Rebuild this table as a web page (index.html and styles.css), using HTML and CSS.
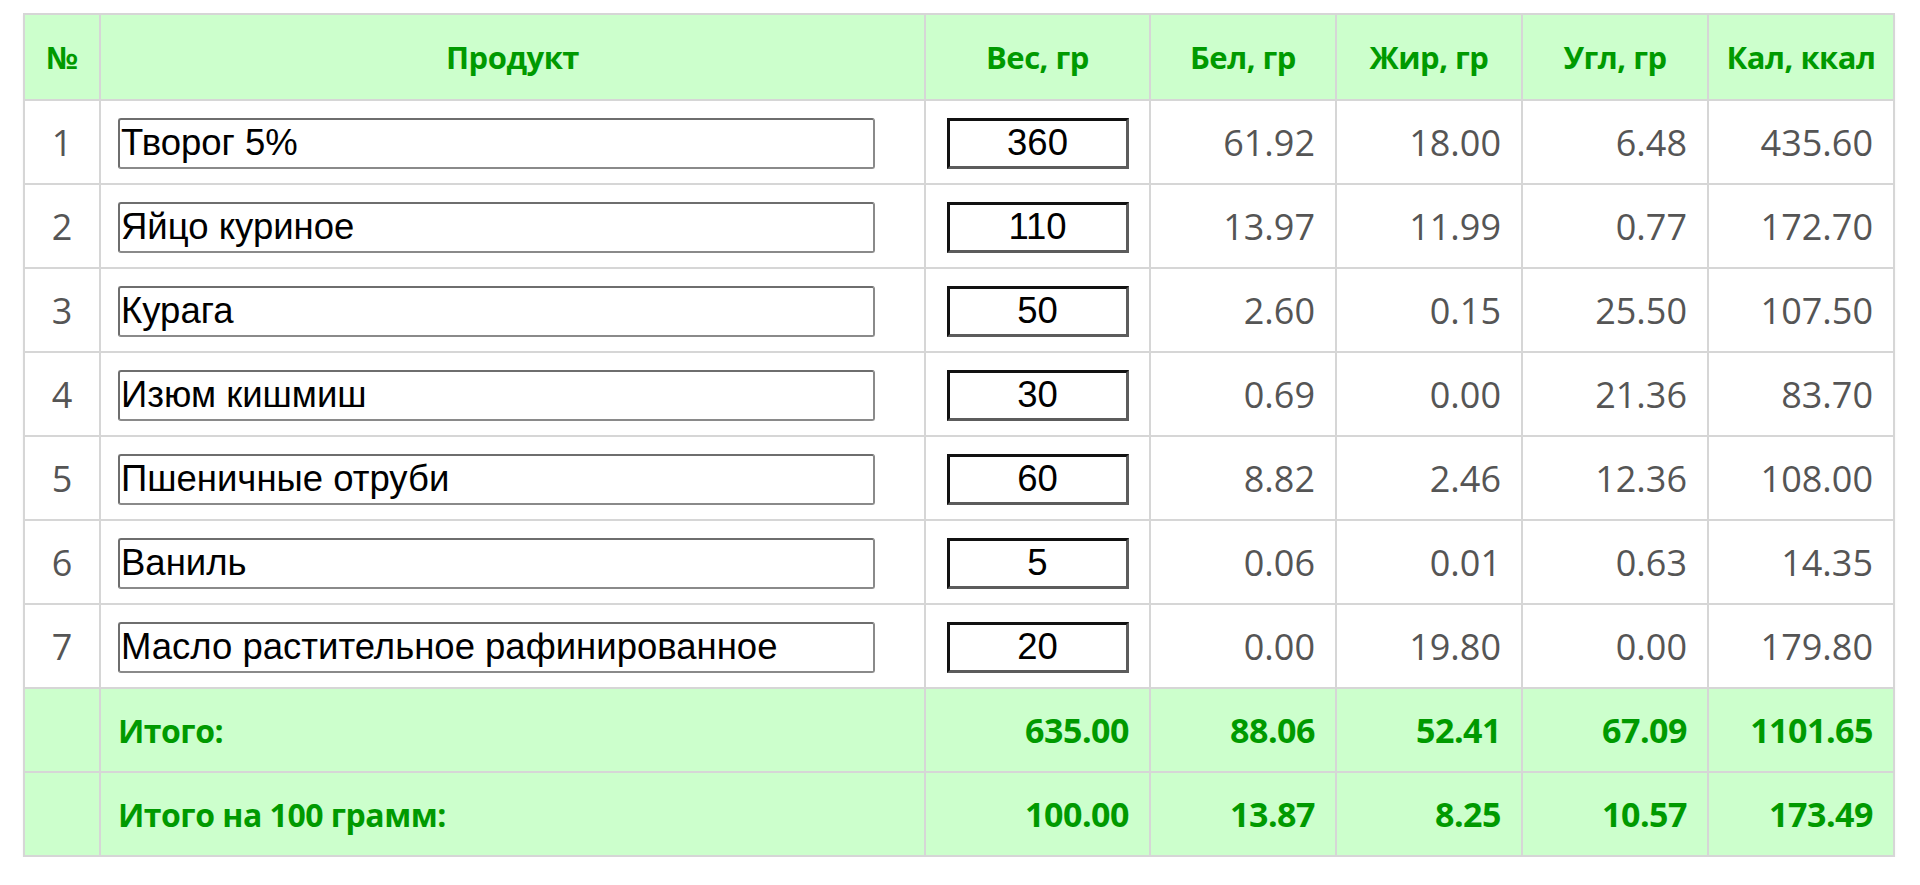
FILE: index.html
```html
<!DOCTYPE html>
<html>
<head>
  <title>Калькулятор калорийности</title>
  <link rel="stylesheet" href="styles.css">
</head>
<body>
  <div class="wrap">
    <table class="calc">
      <colgroup>
        <col class="c-num">
        <col class="c-name">
        <col class="c-weight">
        <col class="c-val">
        <col class="c-val">
        <col class="c-val">
        <col class="c-val">
      </colgroup>
      <thead>
        <tr>
          <th>№</th>
          <th>Продукт</th>
          <th>Вес, гр</th>
          <th>Бел, гр</th>
          <th>Жир, гр</th>
          <th>Угл, гр</th>
          <th>Кал, ккал</th>
        </tr>
      </thead>
      <tbody>
        <tr>
          <td class="num">1</td>
          <td class="name"><input type="text" class="product" value="Творог 5%"></td>
          <td class="weight"><input type="text" class="grams" value="360"></td>
          <td>61.92</td><td>18.00</td><td>6.48</td><td>435.60</td>
        </tr>
        <tr>
          <td class="num">2</td>
          <td class="name"><input type="text" class="product" value="Яйцо куриное"></td>
          <td class="weight"><input type="text" class="grams" value="110"></td>
          <td>13.97</td><td>11.99</td><td>0.77</td><td>172.70</td>
        </tr>
        <tr>
          <td class="num">3</td>
          <td class="name"><input type="text" class="product" value="Курага"></td>
          <td class="weight"><input type="text" class="grams" value="50"></td>
          <td>2.60</td><td>0.15</td><td>25.50</td><td>107.50</td>
        </tr>
        <tr>
          <td class="num">4</td>
          <td class="name"><input type="text" class="product" value="Изюм кишмиш"></td>
          <td class="weight"><input type="text" class="grams" value="30"></td>
          <td>0.69</td><td>0.00</td><td>21.36</td><td>83.70</td>
        </tr>
        <tr>
          <td class="num">5</td>
          <td class="name"><input type="text" class="product" value="Пшеничные отруби"></td>
          <td class="weight"><input type="text" class="grams" value="60"></td>
          <td>8.82</td><td>2.46</td><td>12.36</td><td>108.00</td>
        </tr>
        <tr>
          <td class="num">6</td>
          <td class="name"><input type="text" class="product" value="Ваниль"></td>
          <td class="weight"><input type="text" class="grams" value="5"></td>
          <td>0.06</td><td>0.01</td><td>0.63</td><td>14.35</td>
        </tr>
        <tr>
          <td class="num">7</td>
          <td class="name"><input type="text" class="product" value="Масло растительное рафинированное"></td>
          <td class="weight"><input type="text" class="grams" value="20"></td>
          <td>0.00</td><td>19.80</td><td>0.00</td><td>179.80</td>
        </tr>
      </tbody>
      <tfoot>
        <tr>
          <td></td>
          <td class="name">Итого:</td>
          <td>635.00</td><td>88.06</td><td>52.41</td><td>67.09</td><td>1101.65</td>
        </tr>
        <tr>
          <td></td>
          <td class="name">Итого на 100 грамм:</td>
          <td>100.00</td><td>13.87</td><td>8.25</td><td>10.57</td><td>173.49</td>
        </tr>
      </tfoot>
    </table>
  </div>
</body>
</html>
```

FILE: styles.css
```css
body {
  margin: 0;
  background: #fff;
  font-family: 'Open Sans', 'Noto Sans', sans-serif;
}
.wrap {
  padding: 13px 0 0 23px;
}
.calc {
  border-collapse: collapse;
  table-layout: fixed;
  width: 1869px;
  box-shadow: 0 2px 2px rgba(0,0,0,0.06);
}
.c-num { width: 76px; }
.c-name { width: 825px; }
.c-weight { width: 225px; }
.c-val { width: 186px; }

.calc th, .calc td {
  border: 2px solid #d6d6d6;
  padding: 0 20px;
}
.calc th {
  height: 84px;
  padding: 0 4px;
  background: #ccffcc;
  color: #009a00;
  font-size: 31px;
  font-weight: 700;
  text-align: center;
  letter-spacing: -0.5px;
  white-space: nowrap;
}
.calc td {
  height: 82px;
  color: #555;
  font-size: 36px;
  text-align: right;
}
.calc td.num {
  text-align: center;
  padding: 0;
}
.calc td.name {
  text-align: left;
  padding-left: 17px;
}
.calc td.weight {
  text-align: center;
  padding: 0;
}

/* поля ввода */
.product, .grams {
  font-family: 'Liberation Sans', Arial, sans-serif;
  font-size: 36.5px;
  color: #000;
  height: 51px;
  box-sizing: border-box;
  vertical-align: middle;
  background: #fff;
}
.product {
  width: 757px;
  padding: 0 1px;
  border: 2px solid #8a8a8a;
  border-top-color: #6e6e6e;
  border-left-color: #6e6e6e;
  border-radius: 3px;
}
.grams {
  width: 182px;
  padding: 0;
  text-align: center;
  border: 3px solid #5c5c5c;
  border-top-color: #111;
  border-left-color: #111;
}

.calc tfoot td {
  background: #ccffcc;
  color: #009a00;
  font-weight: 700;
  font-size: 34px;
  letter-spacing: -0.5px;
}
.calc tfoot td.name {
  font-size: 32px;
}
```
